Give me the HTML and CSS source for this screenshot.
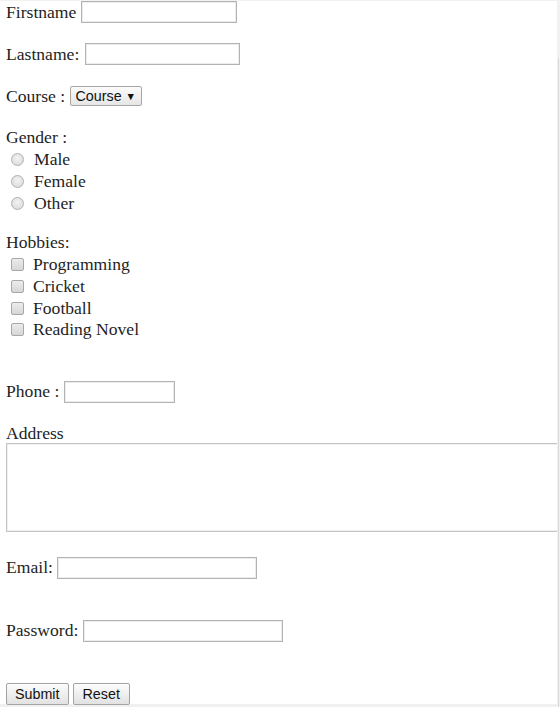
FILE: index.html
```html
<!DOCTYPE html>
<html>
<head>
<meta charset="utf-8">
<link rel="stylesheet" href="styles.css">
</head>
<body>
<form class="form">
  <div class="row r-first">Firstname <input class="txt w-first" type="text"></div>
  <div class="row r-gap20">Lastname: <input class="txt w-last" type="text"></div>
  <div class="row r-gap20">Course : <span class="select">Course <span class="arrow">▼</span></span></div>
  <div class="row r-gender">Gender :</div>
  <div class="row opt"><span class="radio"></span>Male</div>
  <div class="row opt"><span class="radio"></span>Female</div>
  <div class="row opt"><span class="radio"></span>Other</div>
  <div class="row r-hobbies">Hobbies:</div>
  <div class="row chk r-first-chk"><span class="box"></span>Programming</div>
  <div class="row chk"><span class="box"></span>Cricket</div>
  <div class="row chk"><span class="box"></span>Football</div>
  <div class="row chk"><span class="box"></span>Reading Novel</div>
  <div class="row r-phone">Phone : <input class="txt w-phone" type="text"></div>
  <div class="label r-address">Address</div>
  <textarea class="area"></textarea>
  <div class="row r-email">Email: <input class="txt w-mail" type="text"></div>
  <div class="row r-pass">Password: <input class="txt w-mail" type="password"></div>
  <div class="row r-btn"><span class="btn">Submit</span><span class="btn btn-reset">Reset</span></div>
</form>
<div class="vscroll"><div class="thumb"></div></div>
<div class="topline"></div>
<div class="hscroll"></div>
</body>
</html>
```
FILE: styles.css
```css
html, body {
  margin: 0;
  padding: 0;
  background: #fff;
}
body {
  width: 560px;
  height: 707px;
  overflow: hidden;
  position: relative;
  font-family: "Liberation Serif", "Times New Roman", serif;
  font-size: 17.6px;
  color: #1e1e1e;
}
.form {
  padding: 0 0 0 6px;
  display: flex;
  flex-direction: column;
}
.row {
  display: flex;
  align-items: center;
  height: 22px;
  white-space: pre;
}
.r-first { margin-top: 1px; }
.r-gap20 { margin-top: 20px; }
.r-gender { margin-top: 19px; }
.r-hobbies { margin-top: 17px; }
.r-first-chk { margin-top: 1px; }
.chk { height: 21.7px; }
.r-phone { margin-top: 40px; }
.r-address { margin-top: 20px; height: 20px; line-height: 20px; }
.r-email { margin-top: 25px; }
.r-pass { margin-top: 41px; }
.r-btn { margin-top: 41px; position: relative; z-index: 2; }

.txt {
  box-sizing: border-box;
  height: 22px;
  margin: 0;
  padding: 1px 2px;
  border: 1px solid #b3b3b3;
  box-shadow: inset 0 0 0 1px #ececec;
  background: #fff;
  font: 14px "Liberation Sans", Arial, sans-serif;
}
.w-first { width: 156px; }
.w-last { width: 155px; margin-left: 1px; }
.w-phone { width: 111px; }
.w-mail { width: 200px; }

.select {
  box-sizing: border-box;
  height: 20px;
  width: 72px;
  display: inline-flex;
  align-items: center;
  padding: 0 0 0 5px;
  border: 1px solid #a6a6a6;
  border-radius: 2px;
  background: linear-gradient(#fbfbfb, #e6e6e6);
  font: 14.3px "Liberation Sans", Arial, sans-serif;
  color: #111;
}
.arrow {
  font-size: 10.5px;
}

.opt .radio, .chk .box {
  margin-left: 5px;
  margin-right: 10px;
  flex: none;
}
.radio {
  box-sizing: border-box;
  width: 13px;
  height: 13px;
  border-radius: 50%;
  border: 1px solid #b0b0b0;
  background: radial-gradient(circle at 50% 40%, #f2f2f2 0%, #d8d8d8 100%);
}
.box {
  box-sizing: border-box;
  width: 13px;
  height: 13px;
  border-radius: 2px;
  border: 1px solid #a8a8a8;
  background: linear-gradient(#ececec, #d6d6d6);
}
.chk .box { margin-right: 9px; }

.area {
  display: block;
  box-sizing: border-box;
  width: 553px;
  height: 89px;
  margin: 0;
  padding: 2px;
  border: 1px solid #c4c4c4;
  box-shadow: inset 0 0 0 1px #efefef;
  resize: none;
}

.btn {
  box-sizing: border-box;
  height: 22px;
  display: inline-flex;
  align-items: center;
  padding: 0 8px;
  border: 1px solid #a3a3a3;
  border-radius: 2px;
  background: linear-gradient(#fcfcfc, #e2e2e2);
  font: 14.3px "Liberation Sans", Arial, sans-serif;
  color: #111;
  margin-right: 4px;
}
.btn-reset { padding: 0 9px; }

.vscroll {
  position: absolute;
  top: 0;
  right: 0;
  width: 3px;
  height: 707px;
  background: #f1f1f1;
  z-index: 3;
}
.thumb {
  position: absolute;
  top: 58px;
  left: 1px;
  width: 1px;
  bottom: 0;
  background: #d9d9d9;
}
.topline {
  position: absolute;
  top: 0;
  left: 0;
  width: 560px;
  height: 1px;
  background: #f2f2f2;
}
.hscroll {
  position: absolute;
  left: 0;
  bottom: 0;
  width: 560px;
  height: 3px;
  background: #f0f0f0;
  z-index: 1;
}
```
